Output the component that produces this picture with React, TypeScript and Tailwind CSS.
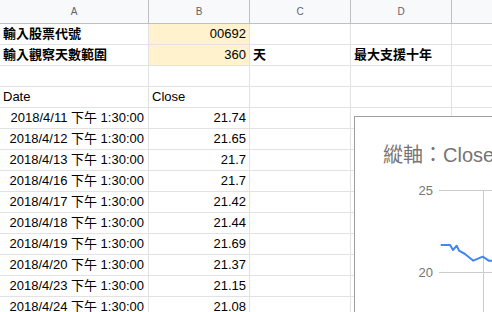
import React from 'react';

const cols = ['A', 'B', 'C', 'D', 'E'];
const widths = ['w-[149px]', 'w-[101px]', 'w-[101px]', 'w-[101px]', 'w-[101px]'];

const rows = [
  ['2018/4/11', '21.74'],
  ['2018/4/12', '21.65'],
  ['2018/4/13', '21.7'],
  ['2018/4/16', '21.7'],
  ['2018/4/17', '21.42'],
  ['2018/4/18', '21.44'],
  ['2018/4/19', '21.69'],
  ['2018/4/20', '21.37'],
  ['2018/4/23', '21.15'],
  ['2018/4/24', '21.08'],
];

const font = { fontFamily: '"Liberation Sans", Arial, "Noto Sans CJK TC", sans-serif' };

function Cell({ i, children, className = '' }: { i: number; children?: React.ReactNode; className?: string }) {
  return (
    <div
      className={`${widths[i]} h-[21px] shrink-0 border-r border-b border-[#e2e2e2] px-[3px] flex items-center text-[13px] text-black whitespace-nowrap overflow-hidden ${className}`}
    >
      {children}
    </div>
  );
}

function Row({ cells }: { cells: React.ReactNode[] }) {
  return (
    <div className="flex">
      {cols.map((_, i) => (
        <Cell key={i} i={i}>{cells[i]}</Cell>
      ))}
    </div>
  );
}

function Chart() {
  const pts = '86.7,129 96,129 99,134 102.7,129.7 105,134.7 111,138 119.3,144.7 128.7,140.7 134.7,144.7 140,144.7';
  return (
    <div className="absolute left-[354px] top-[116px] w-[200px] h-[260px] bg-white border border-[#9e9e9e]">
      <svg width="200" height="260" className="absolute -left-px -top-px">
        <text x="29" y="46" fontSize="20" fill="#757575" style={font}>縱軸：Close</text>
        <line x1="85" y1="74.5" x2="200" y2="74.5" stroke="#cccccc" />
        <line x1="85" y1="156.5" x2="200" y2="156.5" stroke="#cccccc" />
        <line x1="129.5" y1="74" x2="129.5" y2="260" stroke="#cccccc" />
        <text x="79" y="79" fontSize="13" fill="#757575" textAnchor="end" style={font}>25</text>
        <text x="79" y="161" fontSize="13" fill="#757575" textAnchor="end" style={font}>20</text>
        <polyline points={pts} fill="none" stroke="#4285f4" strokeWidth="2" strokeLinejoin="round" />
      </svg>
    </div>
  );
}

export default function App() {
  return (
    <div className="relative w-[492px] h-[312px] overflow-hidden bg-white" style={font}>
      <div className="flex w-max h-[24px] bg-[#f8f9fa] border-b border-[#c0c0c0]">
        {cols.map((c, i) => (
          <div
            key={c}
            className={`${widths[i]} shrink-0 border-r border-[#c0c0c0] flex items-center justify-center text-[10px] text-[#5f6368]`}
          >
            {c}
          </div>
        ))}
      </div>

      <div className="flex w-max">
        <Cell i={0} className="font-bold">輸入股票代號</Cell>
        <Cell i={1} className="bg-[#fff2cc] justify-end">00692</Cell>
        <Cell i={2} />
        <Cell i={3} />
        <Cell i={4} />
      </div>
      <div className="flex w-max">
        <Cell i={0} className="font-bold">輸入觀察天數範圍</Cell>
        <Cell i={1} className="bg-[#fff2cc] justify-end">360</Cell>
        <Cell i={2} className="font-bold">天</Cell>
        <Cell i={3} className="font-bold">最大支援十年</Cell>
        <Cell i={4} />
      </div>
      <Row cells={[]} />
      <Row cells={['Date', 'Close']} />
      {rows.map(([d, v]) => (
        <div className="flex w-max" key={d}>
          <Cell i={0} className="justify-end pr-[4px]">{d} 下午 1:30:00</Cell>
          <Cell i={1} className="justify-end">{v}</Cell>
          <Cell i={2} />
          <Cell i={3} />
          <Cell i={4} />
        </div>
      ))}

      <Chart />
    </div>
  );
}
